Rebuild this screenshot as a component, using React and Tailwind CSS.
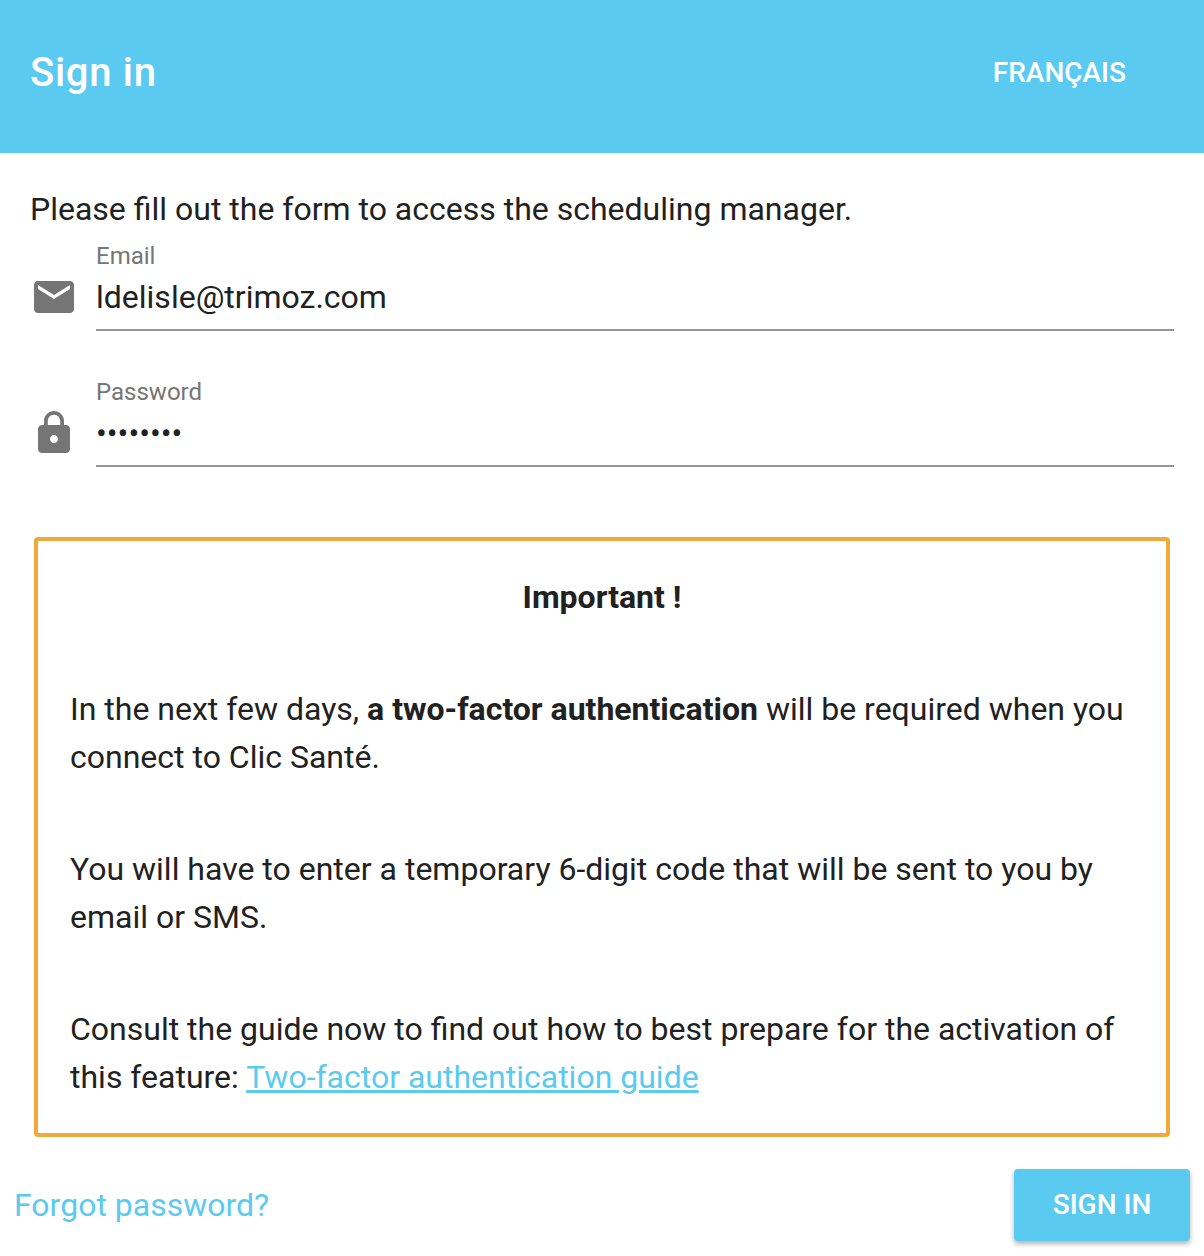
import React from 'react';

function MailIcon() {
  return (
    <svg width="48" height="48" viewBox="0 0 24 24" fill="#757575">
      <path d="M20 4H4c-1.1 0-1.99.9-1.99 2L2 18c0 1.1.9 2 2 2h16c1.1 0 2-.9 2-2V6c0-1.1-.9-2-2-2zm0 4l-8 5-8-5V6l8 5 8-5v2z" />
    </svg>
  );
}

function LockIcon() {
  return (
    <svg width="48" height="48" viewBox="0 0 24 24" fill="#757575">
      <path d="M18 8h-1V6c0-2.76-2.24-5-5-5S7 3.24 7 6v2H6c-1.1 0-2 .9-2 2v10c0 1.1.9 2 2 2h12c1.1 0 2-.9 2-2V10c0-1.1-.9-2-2-2zm-6 9c-1.1 0-2-.9-2-2s.9-2 2-2 2 .9 2 2-.9 2-2 2zm3.1-9H8.9V6c0-1.71 1.39-3.1 3.1-3.1 1.71 0 3.1 1.39 3.1 3.1v2z" />
    </svg>
  );
}

function Field({ label, value, icon }) {
  return (
    <div className="flex items-start">
      <div className="w-[96px] pl-[30px] mt-[29px] shrink-0">{icon}</div>
      <div className="flex-1 mr-[30px]">
        <div className="text-[24px] leading-[24px] text-[#757575]">{label}</div>
        <div className="h-[63px] pt-[9px] border-b-2 border-[#949494] text-[32px] leading-[40px] text-[#212121]">{value}</div>
      </div>
    </div>
  );
}

export default function App() {
  return (
    <div className="w-[1204px] h-[1256px] bg-white overflow-hidden font-['Roboto',sans-serif] text-[#212121] antialiased">
      <header className="h-[153px] bg-[#5bcaf0] flex items-center justify-between pl-[30px] pr-[78px] pb-[8px] text-white">
        <h1 className="text-[40px] font-medium tracking-[0.7px]">Sign in</h1>
        <span className="text-[28px] font-medium">FRANÇAIS</span>
      </header>
      <p className="pl-[30px] pt-[36px] text-[32px] leading-[40px]">Please fill out the form to access the scheduling manager.</p>
      <div className="mt-[15px]">
        <Field label="Email" value="ldelisle@trimoz.com" icon={<MailIcon />} />
      </div>
      <div className="mt-[49px]">
        <Field label="Password" value="••••••••" icon={<LockIcon />} />
      </div>
      <section className="mt-[70px] mx-[34px] h-[600px] border-4 border-[#f2a93b] rounded-[4px] px-[32px] pt-[32px] text-[32px] leading-[48px]">
        <p className="text-center font-bold">Important !</p>
        <p className="mt-[64px]">In the next few days, <b>a two-factor authentication</b> will be required when you connect to Clic Santé.</p>
        <p className="mt-[64px]">You will have to enter a temporary 6-digit code that will be sent to you by email or SMS.</p>
        <p className="mt-[64px]">Consult the guide now to find out how to best prepare for the activation of this feature: <a href="#" className="text-[#5bcaf0] underline">Two-factor authentication guide</a></p>
      </section>
      <footer className="flex items-center justify-between px-[14px] mt-[32px]">
        <a href="#" className="text-[32px] text-[#5bcaf0]">Forgot password?</a>
        <button className="w-[176px] h-[72px] bg-[#5bcaf0] text-white text-[28px] font-medium rounded-[4px] shadow-[0_3px_5px_rgba(0,0,0,0.3)]">SIGN IN</button>
      </footer>
    </div>
  );
}
